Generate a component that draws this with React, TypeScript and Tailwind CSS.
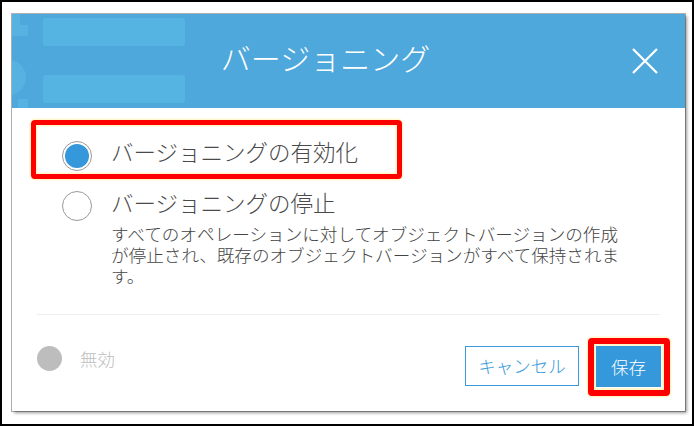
import React from "react";

export default function App() {
  const font = { fontFamily: '"Noto Sans CJK JP", "Noto Sans", sans-serif' };
  return (
    <div
      className="w-[694px] h-[426px] border-2 border-black bg-white pl-[10px] pt-[12px]"
      style={font}
    >
      <div className="w-[673px] h-[397px] bg-white flex flex-col shadow-[0_0_0_1px_rgba(0,0,0,0.3),2px_2px_3px_rgba(0,0,0,0.4)]">
        {/* Header */}
        <div className="relative h-[94px] bg-[#4fa8db] overflow-hidden flex items-center pl-[7px] pr-[27px] shrink-0">
          {/* decorative background shapes */}
          <div className="absolute left-0 top-0 w-[8px] h-[22px] bg-[#55b2e1]" />
          <div className="absolute left-0 top-[11px] w-[16px] h-[11px] bg-[#55b2e1]" />
          <div className="absolute -left-[21px] top-[46px] w-[35px] h-[35px] rounded-full bg-[#55b2e1]" />
          <div className="absolute left-[6px] top-[85px] w-[10px] h-[12px] bg-[#55b2e1]" />
          <div className="absolute left-[31px] top-[4px] w-[142px] h-[28px] rounded-[3px] bg-[#56b4e3]" />
          <div className="absolute left-[31px] top-[61px] w-[142px] h-[28px] rounded-[3px] bg-[#56b4e3]" />

          <div className="relative flex-1 text-center text-white text-[30px] leading-[40px] pb-[9px] font-light">
            バージョニング
          </div>
          <svg className="relative" width="26" height="26" viewBox="0 0 26 26">
            <path d="M1 1 L25 25 M25 1 L1 25" stroke="#ffffff" strokeWidth="2.2" fill="none" />
          </svg>
        </div>

        {/* Body */}
        <div className="relative flex-1 flex flex-col">
          {/* annotation box 1 */}
          <div className="absolute left-[19px] top-[12px] w-[371px] h-[59px] border-[5px] border-[#ff0000] rounded-[4px] shadow-[0_0_0_1.5px_#fff6cc,inset_0_0_0_1.5px_#fff6cc]" />

          <div className="pt-[28px] pl-[50px] flex flex-col">
            <div className="flex items-start">
              <div className="mt-[5px] w-[30px] h-[30px] rounded-full border border-[#9a9a9a] bg-white p-[2px] shrink-0">
                <div className="w-full h-full rounded-full bg-[#3498db]" />
              </div>
              <div className="ml-[19px] text-[22.5px] leading-[30px] text-[#4a4a4a] font-light">
                バージョニングの有効化
              </div>
            </div>

            <div className="flex items-start mt-[16px]">
              <div className="mt-[4px] w-[30px] h-[30px] rounded-full border border-[#9a9a9a] bg-white shrink-0" />
              <div className="ml-[19px] flex flex-col">
                <div className="text-[22.5px] leading-[30px] text-[#4a4a4a] font-light">
                  バージョニングの停止
                </div>
                <div className="mt-[6px] w-[520px] text-[17.6px] leading-[21px] text-[#444444] font-light">
                  すべてのオペレーションに対してオブジェクトバージョンの作成が停止され、既存のオブジェクトバージョンがすべて保持されます。
                </div>
              </div>
            </div>
          </div>

          <div className="mx-[25px] mt-[28px] h-px bg-[#eeeeee]" />

          {/* Footer */}
          <div className="flex items-start pl-[25px] pr-[24px] pt-[31px]">
            <div className="w-[25px] h-[25px] rounded-full bg-[#bdbdbd]" />
            <div className="ml-[18px] text-[17.5px] leading-[25px] text-[#bdbdbd] font-light">無効</div>
            <div className="flex-1" />
            <button className="w-[114px] h-[40px] border border-[#3a9ad9] bg-white text-[#3a9ad9] text-[17.5px] leading-none font-light">
              キャンセル
            </button>
            <div className="relative ml-[17px]">
              <div className="absolute -top-[8px] -bottom-[9px] -left-[8px] -right-[9px] border-[6px] border-[#ff0000] rounded-[4px] shadow-[0_0_0_1.5px_#fff6cc,inset_0_0_0_2px_#fff6cc]" />
              <button className="relative w-[65px] h-[41px] bg-[#3498db] text-white text-[17.5px] leading-none font-light">
                保存
              </button>
            </div>
          </div>
        </div>
      </div>
    </div>
  );
}
